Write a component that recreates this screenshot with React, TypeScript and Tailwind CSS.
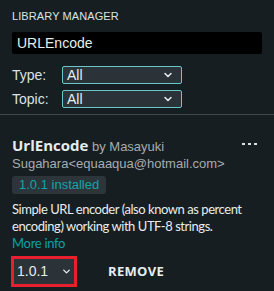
import { ChevronDown } from "lucide-react";

const FilterSelect = ({ label }: { label: string }) => (
  <div className="flex h-[18px] items-center">
    <span className="w-[50px] text-[14px] leading-[18px] text-[#dae3e3]">{label}</span>
    <div className="flex h-[18px] w-[120px] items-center justify-between rounded-[2px] border border-[#6cc5ca] bg-[#2b3338] pl-[4px] pr-[7px]">
      <span className="text-[14px] leading-[16px] text-[#e6eded]">All</span>
      <ChevronDown className="h-[12px] w-[12px] text-[#e6eded]" strokeWidth={3} />
    </div>
  </div>
);

const App = () => {
  return (
    <div className="h-[291px] w-[274px] overflow-hidden bg-[#171e21] font-['Liberation_Sans',Arial,sans-serif]">
      {/* Header */}
      <div className="px-3 pt-[9px]">
        <div className="text-[11px] leading-[14px] tracking-[0.1px] text-[#dae3e3]">LIBRARY MANAGER</div>
        <div className="mt-[9px] flex h-[22px] items-center rounded-[2px] bg-black pl-[5px] text-[14px] text-[#e6eded]">
          URLEncode
        </div>
        <div className="mt-[12px] flex flex-col gap-[6px]">
          <FilterSelect label="Type:" />
          <FilterSelect label="Topic:" />
        </div>
      </div>

      <div className="mt-[6px] h-px bg-[#3f4a4e]" />

      {/* Library card */}
      <div className="px-3 pt-[22px]">
        <div className="flex justify-between">
          <div className="text-[13px] leading-[17px] text-[#a6acaf]">
            <span className="font-['Open_Sans',sans-serif] text-[15px] font-bold text-[#e6eded]">UrlEncode</span> by Masayuki
            <br />
            Sugahara&lt;equaaqua@hotmail.com&gt;
          </div>
          <div className="mr-[5px] mt-[6px] flex gap-[3px]">
            <span className="h-[2px] w-[3px] bg-[#dae3e3]" />
            <span className="h-[2px] w-[3px] bg-[#dae3e3]" />
            <span className="h-[2px] w-[3px] bg-[#dae3e3]" />
          </div>
        </div>
        <div className="mt-[2px] inline-flex h-[18px] items-center rounded-[3px] bg-[#2c363a] px-[7px] text-[13px] text-[#14a3a8]">
          1.0.1 installed
        </div>
        <div className="mt-[5px] font-['Lato',sans-serif] text-[13px] leading-[17px] tracking-[-0.45px] text-[#e6eded]">
          Simple URL encoder (also known as percent encoding) working with UTF-8 strings.
        </div>
        <div className="font-['Lato',sans-serif] text-[13px] leading-[17px] tracking-[-0.3px] text-[#0ca1a6]">More info</div>
        <div className="ml-[-1px] mt-[4px] flex items-center">
          <div className="border-[3px] border-[#e81f2c]">
            <div className="flex h-[25px] w-[60px] items-center justify-between bg-[#2b3338] pl-[3px] pr-[2px]">
              <span className="text-[14px] text-[#e6eded]">1.0.1</span>
              <ChevronDown className="h-[11px] w-[11px] text-[#e6eded]" strokeWidth={3} />
            </div>
          </div>
          <span className="ml-[31px] font-['Open_Sans',sans-serif] text-[13px] font-bold tracking-[0.3px] text-[#e6eded]">
            REMOVE
          </span>
        </div>
      </div>
    </div>
  );
};

export default App;
